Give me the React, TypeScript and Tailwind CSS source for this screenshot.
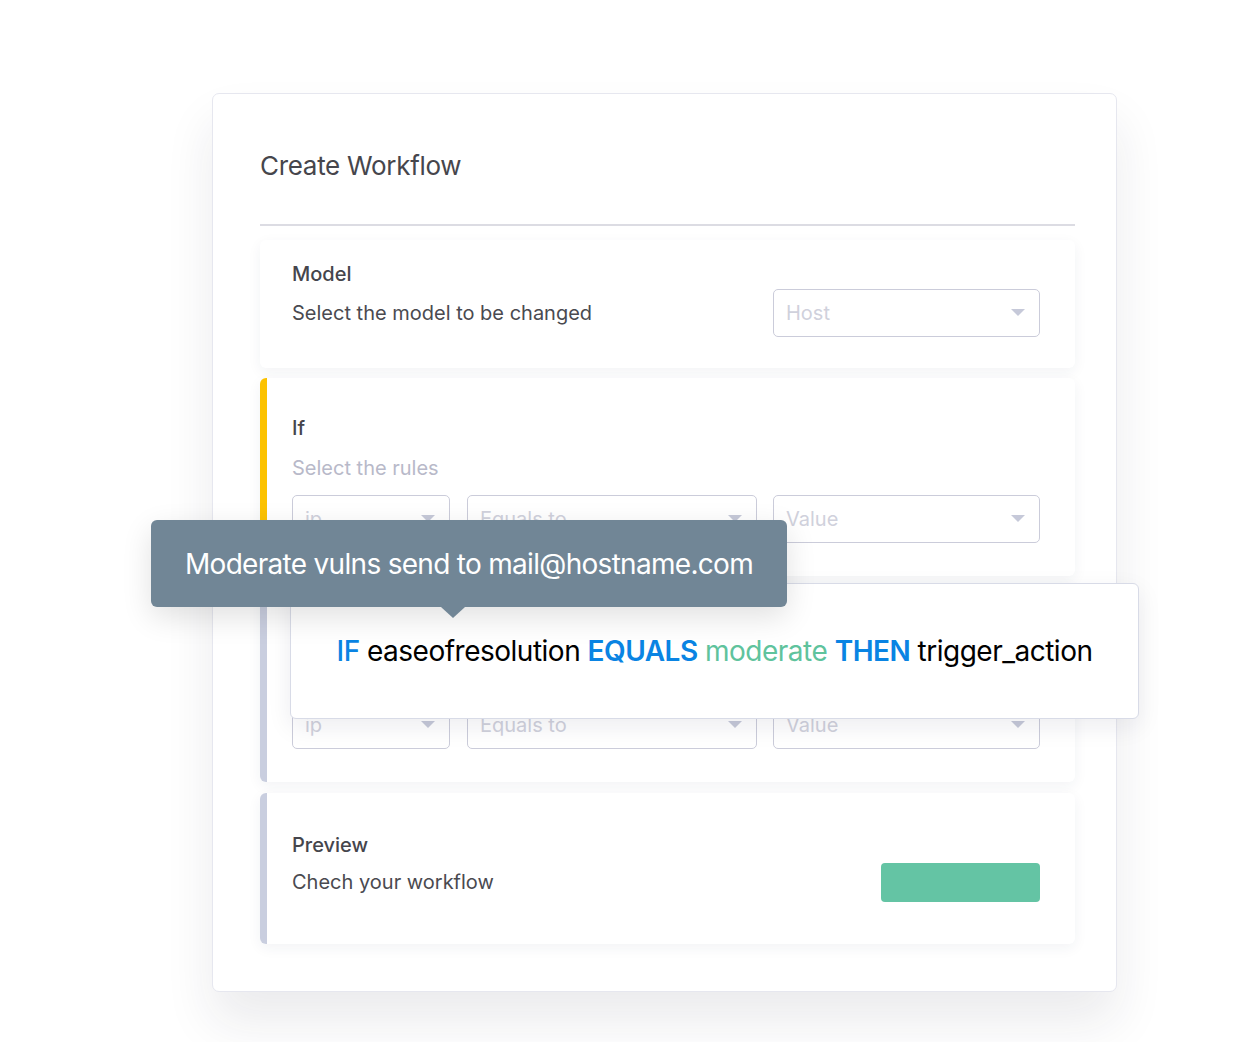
import React from "react";

const Caret = () => (
  <svg width="14" height="8" viewBox="0 0 14 8" className="shrink-0">
    <path d="M0 0 L14 0 L7 7 Z" fill="#c6c9d9" />
  </svg>
);

const Select = ({ label, className }: { label: string; className: string }) => (
  <div
    className={`h-[48px] rounded-[5px] border border-[#cbccda] bg-white flex items-center justify-between pl-[12px] pr-[14px] ${className}`}
  >
    <span className="text-[20px] text-[#d0d1dc] leading-none">{label}</span>
    <Caret />
  </div>
);

const RuleSection = ({ bar, title, desc }: { bar: string; title?: string; desc?: string }) => (
  <div className={`h-[198px] rounded-[6px] bg-white shadow-[0_4px_14px_rgba(40,45,80,0.06)] flex`}>
    <div className={`w-[7px] rounded-l-[6px] ${bar}`} />
    <div className="flex-1 pl-[25px] pr-[35px] pt-[38px]">
      <div className="h-[24px] text-[20px] leading-[24px] font-medium text-[#45454c]">{title}</div>
      <div className="h-[24px] mt-[16px] text-[20px] leading-[24px] text-[#b8b9c9]">{desc}</div>
      <div className="mt-[15px] flex">
        <Select label="ip" className="w-[158px]" />
        <Select label="Equals to" className="w-[290px] ml-[17px]" />
        <Select label="Value" className="w-[267px] ml-[16px]" />
      </div>
    </div>
  </div>
);

export default function App() {
  return (
    <div
      className="min-h-[1042px] w-[1251px] bg-white pt-[93px] pl-[212px]"
      style={{ fontFamily: "Inter, 'Noto Sans', sans-serif" }}
    >
      <div className="relative w-[905px] h-[899px] rounded-[7px] border border-[#e6e7ef] bg-white shadow-[0_30px_50px_rgba(30,30,50,0.09)] pl-[47px] pr-[41px] pt-[55px]">
        <h1 className="text-[26px] leading-[34px] font-normal text-[#46464c] tracking-[-0.3px]">Create Workflow</h1>
        <div className="mt-[41px] h-[2px] bg-[#dcdce3]" />

        <div className="mt-[14px] flex flex-col">
          {/* Model */}
          <div className="h-[128px] rounded-[6px] bg-white shadow-[0_4px_14px_rgba(40,45,80,0.06)] flex items-start pl-[32px] pr-[35px] pt-[22px]">
            <div className="flex-1">
              <div className="text-[20px] leading-[24px] font-medium text-[#45454c]">Model</div>
              <div className="mt-[15px] text-[20px] leading-[24px] text-[#4a4a50]">Select the model to be changed</div>
            </div>
            <Select label="Host" className="w-[267px] mt-[27px]" />
          </div>

          <div className="mt-[10px]">
            <RuleSection bar="bg-[#fcc200]" title="If" desc="Select the rules" />
          </div>
          <div className="mt-[8px]">
            <RuleSection bar="bg-[#c9cedf]" />
          </div>

          {/* Preview */}
          <div className="mt-[11px] h-[151px] rounded-[6px] bg-white shadow-[0_4px_14px_rgba(40,45,80,0.06)] flex">
            <div className="w-[7px] rounded-l-[6px] bg-[#c9cedf]" />
            <div className="flex-1 flex items-start pl-[25px] pr-[35px] pt-[40px]">
              <div className="flex-1">
                <div className="text-[20px] leading-[24px] font-medium text-[#45454c]">Preview</div>
                <div className="mt-[13px] text-[20px] leading-[24px] text-[#4a4a50]">Chech your workflow</div>
              </div>
              <button className="mt-[30px] w-[159px] h-[39px] rounded-[4px] bg-[#64c4a4]" />
            </div>
          </div>
        </div>

        {/* Popup */}
        <div className="absolute left-[77px] top-[489px] w-[849px] h-[136px] rounded-[6px] border border-[#d8dbe7] bg-white shadow-[0_8px_24px_rgba(30,30,60,0.08)] flex items-center justify-center">
          <span className="text-[28px] tracking-[-0.5px] text-black whitespace-nowrap">
            <span className="text-[#0a84e3] font-medium">IF</span> easeofresolution{" "}
            <span className="text-[#0a84e3] font-semibold">EQUALS</span>{" "}
            <span className="text-[#5fc39d]">moderate</span>{" "}
            <span className="text-[#0a84e3] font-semibold">THEN</span> trigger_action
          </span>
        </div>

        {/* Tooltip */}
        <div className="absolute left-[-62px] top-[426px] w-[636px] h-[87px] rounded-[6px] bg-[#718696] shadow-[0_10px_30px_rgba(0,0,0,0.12)] flex items-center justify-center">
          <span className="text-[28px] text-white tracking-[-0.7px]">Moderate vulns send to mail@hostname.com</span>
          <div className="absolute left-[290px] bottom-[-11px] w-0 h-0 border-l-[12px] border-r-[12px] border-t-[11px] border-l-transparent border-r-transparent border-t-[#718696]" />
        </div>
      </div>
    </div>
  );
}
